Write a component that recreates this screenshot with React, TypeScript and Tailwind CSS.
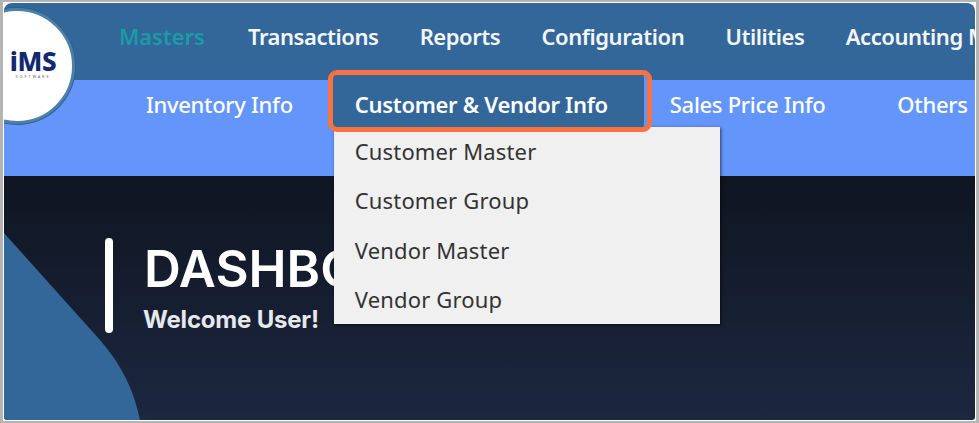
const mainMenu = ["Transactions", "Reports", "Configuration", "Utilities", "Accounting Masters"];
const customerMenu = ["Customer Master", "Customer Group", "Vendor Master", "Vendor Group"];

const Logo = () => (
  <div className="absolute left-[-45px] top-[5px] z-10 flex h-[116px] w-[116px] items-center justify-center rounded-full border-[3px] border-[#4d7fa8] bg-white pl-[32px] shadow-[0_0_0_1px_#2f5f8c]">
    <div className="flex flex-col items-center">
      <span className="text-[26px] leading-[22px] font-extrabold tracking-[-0.4px] text-[#12296f]">iMS</span>
      <span className="text-[4px] leading-[10px] tracking-[1.8px] text-gray-500">SOFTWARE</span>
    </div>
  </div>
);

const App = () => {
  return (
    <div className="h-[423px] w-[979px] overflow-hidden border-y-2 border-x-[3px] border-[#b4b4b4] bg-white pt-px pr-px pb-px pl-px font-['Noto_Sans',sans-serif]">
      <div className="relative flex h-[417px] flex-col overflow-hidden rounded-t-[8px] rounded-b-[3px]">
        <Logo />
        <nav className="flex h-[77px] shrink-0 items-center gap-[41.3px] bg-[#336699] pb-[11px] pl-[115px] text-[22px] font-semibold tracking-[-0.45px] whitespace-nowrap text-[#f4f6f8]">
          <span className="mr-[2px] tracking-[-0.1px] text-[#1a9ba8]">Masters</span>
          {mainMenu.map((item) => (
            <span key={item}>{item}</span>
          ))}
        </nav>
        <div className="flex h-[96px] shrink-0 items-start bg-[#6495fb] pl-[142px] text-[22px] font-medium tracking-[-0.3px] whitespace-nowrap text-white">
          <span className="mt-[8px]">Inventory Info</span>
          <div className="relative z-20 mt-[-5px] ml-[40px] h-[52px]">
            <div className="relative z-10 flex h-[52px] w-[314px] items-center rounded-[4px] border-r-[3px] border-[#6495fb] bg-[#336699] pt-[6px] pl-[22px] font-semibold tracking-[-0.3px] outline-[5px] outline-[#fb7240]">
              Customer &amp; Vendor Info
            </div>
            <ul className="absolute top-[52px] left-[1px] flex h-[197px] w-[386px] flex-col bg-[#f0f0f0] pl-[21px] text-[22px] font-normal tracking-[0.15px] text-[#333333] shadow-[1px_1px_3px_rgba(0,0,0,0.6)]">
              {customerMenu.map((item) => (
                <li key={item} className="flex h-[49.25px] items-center">
                  {item}
                </li>
              ))}
            </ul>
          </div>
          <span className="mt-[8px] ml-[23px]">Sales Price Info</span>
          <span className="mt-[8px] ml-[72px]">Others</span>
        </div>
        <main className="relative flex-1 bg-gradient-to-b from-[#0f1521] to-[#1c2740] pt-[62px] pl-[101px]">
          <svg className="absolute bottom-0 left-0 h-[187px] w-[140px]" viewBox="0 0 140 187" fill="#336699">
            <path d="M0 0 L96 107 C118 132 130 158 136 187 L0 187 Z" />
          </svg>
          <div className="relative flex items-start gap-[31px] font-['Inter',sans-serif] text-white">
            <div className="h-[95px] w-[8px] rounded-full bg-white" />
            <div>
              <h1 className="mt-[1px] text-[51px] leading-[60px] font-semibold">DASHBOARD</h1>
              <p className="mt-[6px] -ml-px text-[24px] leading-[30px] font-bold tracking-[-0.2px] text-[#e6e8ec]">Welcome User!</p>
            </div>
          </div>
        </main>
      </div>
    </div>
  );
};

export default App;
